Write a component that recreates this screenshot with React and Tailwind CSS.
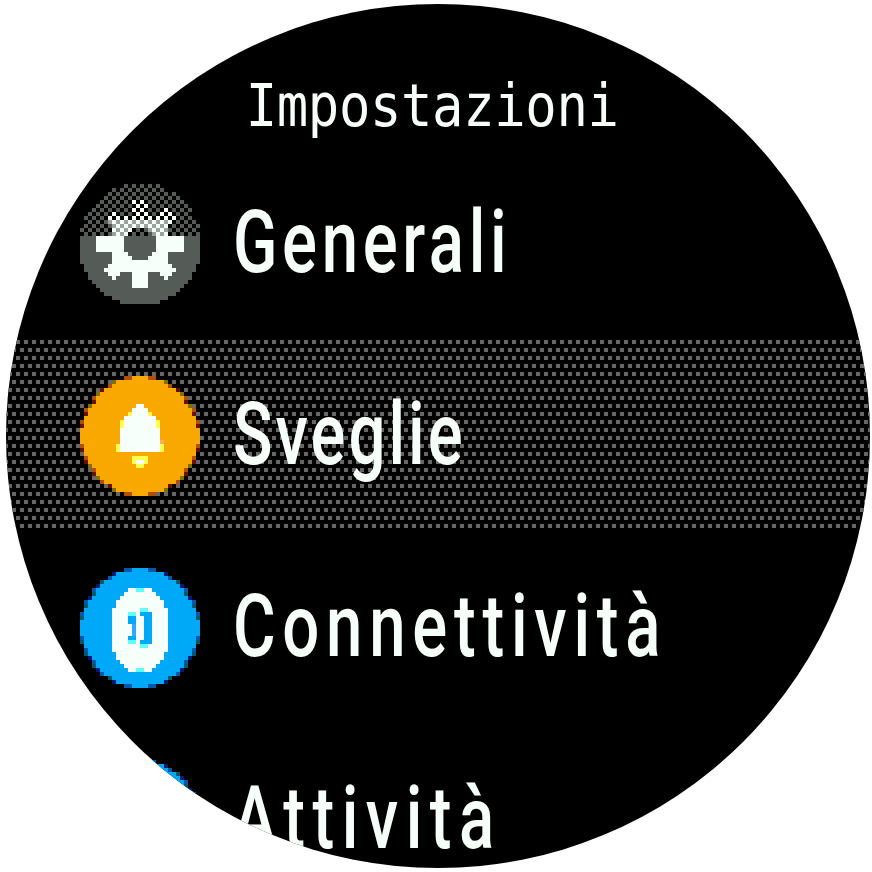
const WHITE = "#f6fff9";
const GRAY = "#555b57";
const ORANGE = "#f8a800";
const BLUE = "#00a8f8";

// every icon is a 30x30 bitmap of the watch's 4px pixels
function disc(color, fringe) {
  const rows = [];
  for (let r = 0; r < 30; r++) {
    const half = Math.round(Math.sqrt(225 - (r - 14.5) * (r - 14.5)));
    rows.push([r, 15 - half, 14 + half, color]);
    const dist = Math.abs(r - 14.5);
    if (dist >= 14) {
      rows.push([r, 11, 12, fringe[2]]);
      rows.push([r, 17, 18, fringe[2]]);
    } else if (dist >= 2.5 && (dist <= 3.5 || dist >= 5.5)) {
      const tone = fringe[r % 3];
      rows.push([r, 15 - half, 15 - half, tone]);
      rows.push([r, 14 + half, 14 + half, tone]);
    }
  }
  return rows;
}

function PixelIcon({ cells, className = "" }) {
  return (
    <svg viewBox="0 0 30 30" shapeRendering="crispEdges" className={`h-[120px] w-[120px] shrink-0 ${className}`}>
      {cells.map(([r, from, to, color], i) => (
        <rect key={i} x={from} y={r} width={to - from + 1} height={1} fill={color} />
      ))}
    </svg>
  );
}

function gearCells() {
  const cells = [];
  for (let r = 0; r < 30; r++) {
    for (let c = 0; c < 30; c++) {
      const dx = c + 0.5 - 15;
      const dy = r + 0.5 - 15;
      const d = Math.hypot(dx, dy);
      if (d > 15.2) continue;
      const ax = Math.abs(dx);
      const ay = Math.abs(dy);
      const v = Math.abs(ax - ay) / Math.SQRT2;
      const tooth = d <= 11.2 && (ay <= 2 || ax <= 2 || v <= 1.6);
      const isGear = d >= 4.2 && (d <= 7.6 || tooth);
      const dark = r < 13 && (r + c) % 2 === 0;
      let color = isGear ? WHITE : GRAY;
      if (dark) color = isGear ? "#9aa39d" : "#000000";
      if (r < 9 && dark && isGear) color = "#000000";
      cells.push([r, c, c, color]);
    }
  }
  return cells;
}

const bell = [
  ...disc(ORANGE, ["#6b1000", "#807000", "#b05000"]),
  [7, 14, 15, WHITE],
  [8, 13, 16, WHITE],
  [9, 12, 17, WHITE],
  [9, 12, 12, "#fff860"],
  [9, 17, 17, "#fff860"],
  [10, 11, 18, WHITE],
  [11, 10, 19, WHITE],
  [11, 10, 10, "#ffff50"],
  [11, 19, 19, "#ffff50"],
  [12, 10, 19, WHITE],
  [12, 10, 10, "#ffff50"],
  [12, 19, 19, "#ffff50"],
  [13, 10, 19, WHITE],
  [14, 10, 19, WHITE],
  [15, 10, 19, WHITE],
  [16, 10, 19, WHITE],
  [16, 20, 20, "#ffa860"],
  [17, 9, 20, WHITE],
  [17, 9, 9, "#ffff50"],
  [17, 20, 20, "#ffff50"],
  [18, 9, 20, WHITE],
  [18, 9, 9, "#ffff50"],
  [18, 20, 20, "#ffff50"],
  [20, 13, 16, "#ffff50"],
  [21, 13, 16, "#ffff50"],
  [21, 14, 15, WHITE],
  [22, 14, 15, "#ffff50"],
];

const capsuleRows = [
  [5, 12, 17],
  [6, 11, 18],
  [7, 10, 19],
  [8, 9, 20],
  [9, 9, 20],
];

const CYAN = "#60ffff";
const MID = "#30a8ff";

const link = [
  ...disc(BLUE, ["#00586a", "#001a78", "#0058b0"]),
  ...capsuleRows.map(([r, a, b]) => [r, a, b, WHITE]),
  [5, 14, 15, CYAN],
  ...[10, 11, 12, 13, 14, 15, 16, 17, 18, 19, 20].map((r) => [r, 8, 21, WHITE]),
  ...capsuleRows.map(([r, a, b]) => [30 - r, a, b, WHITE]),
  [25, 14, 15, CYAN],
  [11, 12, 13, CYAN],
  [12, 12, 13, BLUE],
  [13, 12, 13, BLUE],
  [14, 13, 13, MID],
  [15, 13, 13, MID],
  [16, 13, 13, MID],
  [17, 12, 13, BLUE],
  [18, 12, 13, CYAN],
  [10, 15, 16, CYAN],
  [11, 15, 17, BLUE],
  [12, 16, 17, BLUE],
  [13, 16, 17, BLUE],
  [14, 16, 17, BLUE],
  [15, 16, 17, BLUE],
  [16, 16, 17, BLUE],
  [17, 16, 17, BLUE],
  [18, 15, 17, BLUE],
  [19, 15, 16, CYAN],
];

const rows = [
  { label: "Generali", cells: gearCells(), text: "tracking-[6.2px]" },
  { label: "Sveglie", cells: bell, text: "tracking-[4px]", band: true },
  { label: "Connettività", cells: link, text: "tracking-[9px]" },
  { label: "Attività", cells: link, text: "tracking-[10px]" },
];

export default function App() {
  return (
    <div className="h-[872px] w-[872px] overflow-hidden bg-white pl-[6px] pt-[4px]">
      <div className="h-[864px] w-[864px] overflow-hidden rounded-full bg-black text-[#f6fff9]">
        <div className="flex h-[144px] justify-center pr-[12px] pt-[63px]">
          <span className="scale-x-90 font-['DejaVu_Sans_Mono',monospace] text-[58px] leading-[78px] tracking-[-0.4px]">Impostazioni</span>
        </div>
        {rows.map((row) => (
          <div
            key={row.label}
            className={
              row.band
                ? "flex h-[192px] items-center gap-[33px] bg-[image:conic-gradient(at_4px_4px,transparent_75%,#666_0),conic-gradient(at_4px_4px,transparent_75%,#666_0)] bg-[length:8px_16px] bg-[position:2px_0,6px_8px] pl-[74px]"
                : "flex h-[192px] items-center gap-[33px] pl-[74px]"
            }
          >
            <PixelIcon cells={row.cells} />
            <span className={`mb-[4px] origin-left scale-x-75 whitespace-nowrap font-['Roboto',sans-serif] text-[87px] font-medium leading-none ${row.text}`}>
              {row.label}
            </span>
          </div>
        ))}
      </div>
    </div>
  );
}
